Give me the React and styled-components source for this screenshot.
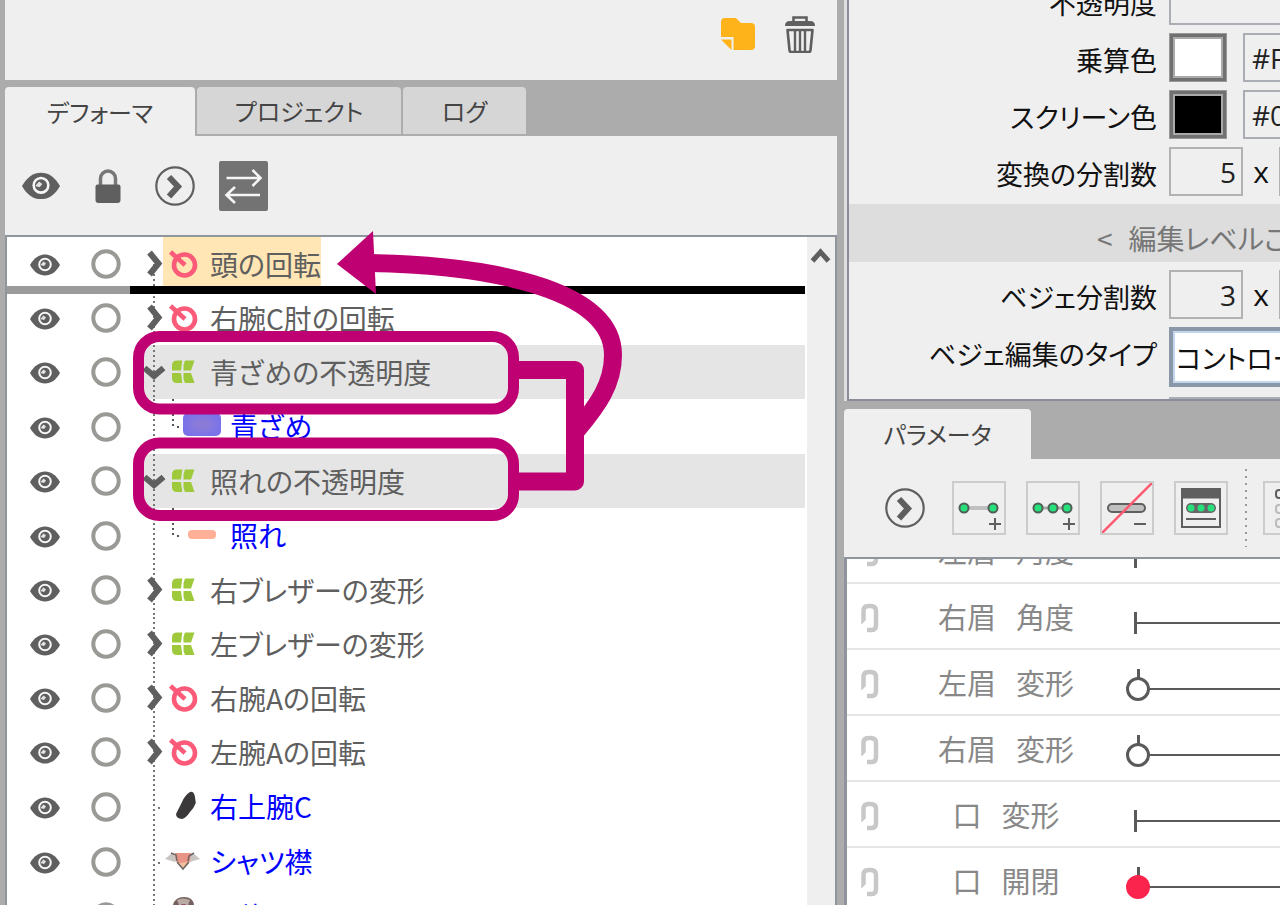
import React, { useState } from 'react';
import styled, { createGlobalStyle, css } from 'styled-components';

const INK = '#5f5f5f';
const ACCENT = '#bf0072';

const GlobalStyle = createGlobalStyle`
  * { box-sizing: border-box; }
  body { margin: 0; background: #acacac; }
  body, button, input, select {
    font-family: "Noto Sans CJK JP", "Noto Sans", sans-serif;
    font-feature-settings: "palt";
  }
`;

const Workspace = styled.main`
  display: flex;
  height: 100vh;
  overflow: hidden;
  background: #acacac;
  color: #585858;
`;

const LeftColumn = styled.div`
  flex: 0 0 65%;
  min-width: 0;
  margin-left: 5px;
  display: flex;
  flex-direction: column;
`;

const RightColumn = styled.div`
  flex: 1;
  min-width: 0;
  margin-left: 7px;
  display: flex;
  flex-direction: column;
`;

const IconButton = styled.button`
  display: grid;
  place-items: center;
  flex: none;
  padding: 0;
  border: 0;
  background: none;
  color: ${INK};
  svg { display: block; }
`;

const PartsFooter = styled.section`
  height: 80px;
  flex: none;
  display: flex;
  justify-content: flex-end;
  align-items: flex-start;
  gap: 28px;
  padding: 15px 21px;
  background: #efefef;
`;

const TabBar = styled.div`
  display: flex;
  flex: none;
  gap: 2px;
  height: ${(p) => p.$height}px;
  padding-top: ${(p) => p.$gap}px;
`;

const Tab = styled.button`
  width: ${(p) => p.$width}px;
  height: ${(p) => (p.$active ? '100%' : '47px')};
  padding: 0;
  border: 0;
  border-radius: 4px 4px 0 0;
  background: ${(p) => (p.$active ? '#efefef' : '#d6d6d6')};
  color: #444;
  font-size: 24px;
  line-height: 48px;
  white-space: nowrap;
`;

const ToolBar = styled.div`
  display: flex;
  flex: none;
  align-items: center;
  background: #efefef;
`;

const DeformerTools = styled(ToolBar)`
  height: 99px;
  padding-left: 16px;
`;

const ToolSlot = styled(IconButton)`
  width: ${(p) => p.$width}px;
  height: 52px;
`;

const RowSlot = styled(ToolSlot)`
  padding-top: 2px;
`;

const TreePanel = styled.div`
  position: relative;
  flex: 1;
  min-height: 0;
  display: flex;
  border: 2px solid #8f969d;
  border-bottom: 0;
  background: #fff;
`;

const TreeRows = styled.ul`
  position: relative;
  flex: 1;
  min-width: 0;
  height: 100%;
  overflow: hidden;
  margin: 0;
  padding: 0;
  list-style: none;
`;

const TreeRow = styled.li`
  position: relative;
  display: flex;
  align-items: center;
  height: ${(p) => (p.$leaf ? 55 : 54)}px;
  margin-right: 2px;
`;

const TreeCell = styled.div`
  align-self: stretch;
  flex: 1;
  min-width: 0;
  display: flex;
  align-items: center;
  margin-left: 11px;
  background: ${(p) => (p.$selected ? '#e5e5e5' : 'transparent')};
`;

const Guide = styled.div`
  align-self: stretch;
  flex: none;
  display: grid;
  align-items: center;
  justify-content: start;
  width: 22px;
  padding-left: 1px;
  background:
    linear-gradient(#777, #777) 17px 28px / ${(p) => (p.$stub ? 2 : 0)}px 2px no-repeat,
    repeating-linear-gradient(#777 0 2px, transparent 2px 5px) 12px ${(p) => (p.$first ? 27 : 0)}px / 2px 100% no-repeat;
  color: ${INK};
  svg { position: relative; }
`;

const Branch = styled.div`
  align-self: stretch;
  flex: none;
  width: 20px;
  background:
    repeating-linear-gradient(#555 0 2px, transparent 2px 5px) 9px 0 / 2px 29px no-repeat,
    linear-gradient(#555, #555) 14px 27px / 2px 2px no-repeat;
`;

const NodeLabel = styled.div`
  display: flex;
  align-items: center;
  height: 54px;
  align-self: flex-start;
  gap: 7px;
  background: ${(p) => (p.$dropTarget ? '#ffe6b4' : 'transparent')};
  color: ${(p) => (p.$art ? '#0000ff' : INK)};
  font-size: 28px;
  line-height: 54px;
  white-space: nowrap;
  svg { flex: none; display: block; }
  span { height: 54px; }
`;

const DropLine = styled.div`
  position: absolute;
  z-index: 1;
  top: 49px;
  left: 0;
  right: 0;
  height: 8px;
  background: linear-gradient(to right, #9b9b9b 123px, #000 123px);
`;

const ScrollTrack = styled.div`
  flex: none;
  width: 28px;
  padding-top: 9px;
  background: #efefef;
`;

const Annotation = styled.svg`
  position: absolute;
  z-index: 2;
  left: 123px;
  top: -12px;
  pointer-events: none;
`;

const SettingsPanel = styled.form`
  flex: none;
  height: 401px;
  margin: 0 0 0 3px;
  display: flex;
  flex-direction: column;
  justify-content: flex-end;
  gap: 8px;
  overflow: hidden;
  border-left: 2px solid #8a8e96;
  border-bottom: 2px solid #8a8e96;
  box-shadow: -3px 0 0 #dedede;
  background: #efefef;
`;

const SettingRow = styled.div`
  flex: none;
  display: flex;
  align-items: flex-start;
  min-height: 49px;
  color: #111;
  font-size: 27px;
  white-space: nowrap;
`;

const ClippedRow = styled(SettingRow)`
  min-height: 0;
  height: 4px;
  padding-top: 2px;
  overflow: hidden;
`;

const SettingLabel = styled.label`
  flex: none;
  width: 308px;
  height: 49px;
  margin-right: 12px;
  text-align: right;
  line-height: 53px;
`;

const fieldLook = css`
  flex: none;
  height: 49px;
  border: 2px solid #b2b2b2;
  background: #efefef;
  color: #222;
  font-family: "Open Sans", "Noto Sans CJK JP", sans-serif;
  font-size: 28px;
`;

const NumberField = styled.input`
  ${fieldLook}
  width: 74px;
  padding: 0 5px 0;
  text-align: right;
`;

const TextField = styled.input`
  ${fieldLook}
  width: ${(p) => p.$width}px;
  padding: 0 7px;
  border-color: #aaaeb4;
`;

const Times = styled.span`
  width: 36px;
  flex: none;
  font-family: "Open Sans", sans-serif;
  font-size: 30px;
  line-height: 49px;
  text-align: center;
`;

const Swatch = styled.button`
  flex: none;
  width: 58px;
  height: 49px;
  margin-right: 16px;
  padding: 0;
  border: 4px solid #707070;
  outline: 1px solid #999;
  outline-offset: -1px;
  box-shadow: inset 0 0 0 2px #aaa;
  background: ${(p) => p.$color};
`;

const Select = styled.select`
  flex: none;
  width: 260px;
  height: 60px;
  padding: 0 3px;
  appearance: none;
  border: 4px solid #8a97a8;
  border-radius: 0;
  box-shadow: inset 0 0 0 2px #c3d6ec;
  background: #fff;
  color: #111;
  font-size: 27px;
`;

const LevelBand = styled.div`
  flex: none;
  display: flex;
  gap: 16px;
  height: 58px;
  padding: 6px 0 0 248px;
  background: #dddddd;
  color: #777;
  font-size: 28px;
  line-height: 56px;
  white-space: nowrap;
`;

const ParameterTools = styled(ToolBar)`
  height: 98px;
  gap: 20px;
  padding-left: 41px;
  overflow: hidden;
`;

const RoundTool = styled(IconButton)`
  width: 40px;
  height: 40px;
  margin-right: 7px;
`;

const KeyTool = styled(IconButton)`
  width: 54px;
  height: 54px;
  border: 2px solid #cccccc;
`;

const ToolDivider = styled.div`
  flex: none;
  width: 2px;
  height: 78px;
  margin: 0 -4px 0 -3px;
  background: repeating-linear-gradient(#999 0 2px, transparent 2px 7px);
`;

const ParameterList = styled.ul`
  flex: 1;
  min-height: 0;
  overflow: hidden;
  margin: 0;
  padding: 0;
  list-style: none;
  border-top: 2px solid #8f949d;
  border-left: 3px solid #8f949d;
  background: #fff;
`;

const ParameterRow = styled.li`
  display: flex;
  align-items: ${(p) => (p.$clipped ? 'flex-end' : 'stretch')};
  height: ${(p) => (p.$clipped ? 25 : 66)}px;
  overflow: hidden;
  border-bottom: 2px solid #e6e6e6;
  color: #888;
`;

const ParameterInner = styled.div`
  display: flex;
  flex: none;
  align-items: center;
  height: 64px;
`;

const LinkButton = styled(IconButton)`
  width: 46px;
  padding-top: 3px;
  color: #c8c8c8;
`;

const ParameterName = styled.label`
  display: flex;
  justify-content: center;
  gap: 20px;
  width: 226px;
  font-size: 29px;
  line-height: 64px;
  white-space: nowrap;
`;

const barThumb = css`
  border: 0;
  background: linear-gradient(#5a5a5a, #5a5a5a) 8px 1px / 3px 22px no-repeat;
`;

const knobThumb = css`
  border: 3px solid ${(p) => (p.$kind === 'key' ? '#fb244d' : '#5a5a5a')};
  border-radius: 50%;
  background: ${(p) => (p.$kind === 'key' ? '#fb244d' : '#fff')};
`;

const Slider = styled.input`
  flex: none;
  width: 300px;
  height: 64px;
  margin: 0 0 0 7px;
  appearance: none;
  background:
    linear-gradient(#5a5a5a, #5a5a5a) 10px 38px / 100% 2px no-repeat,
    linear-gradient(#5a5a5a, #5a5a5a) 11px 19px / 3px ${(p) => (p.$kind === 'bar' ? 0 : 12)}px no-repeat;
  &::-webkit-slider-thumb {
    appearance: none;
    width: 24px;
    height: 24px;
    margin-top: 14px;
    ${(p) => (p.$kind === 'bar' ? barThumb : knobThumb)}
  }
`;

const EyeIcon = ({ size = 30 }) => (
  <svg width={size} height={(size * 22) / 30} viewBox="0 0 30 22" aria-hidden="true">
    <path d="M0 11C4 4 9 .5 15 .5S26 4 30 11C26 18 21 21.500 15 21.500S4 18 0 11Z" fill={INK} />
    <circle cx="15" cy="10.500" r="5.800" fill={INK} stroke="#f7f7f7" strokeWidth="2" />
    <path d="M10.500 11 13.500 7.500l2.500 2-2 2.500Z" fill="#e4e4e4" />
  </svg>
);

const LockIcon = () => (
  <svg width="26" height="36" viewBox="0 0 26 36" aria-hidden="true">
    <path d="M5.500 17V10.500a7.500 7.500 0 0 1 15 0V17" fill="none" stroke="#777" strokeWidth="3.500" />
    <path d="M.5 18.500q0-2 2-2h21q2 0 2 2V32q0 3-3 3H3.500q-3 0-3-3Z" fill={INK} />
  </svg>
);

const RoundChevron = () => (
  <svg width="40" height="40" viewBox="0 0 40 40" aria-hidden="true">
    <circle cx="20" cy="20" r="18.700" fill="none" stroke={INK} strokeWidth="2.200" />
    <path d="M14 11 23 20.500 14 30.500" fill="none" stroke={INK} strokeWidth="6" />
  </svg>
);

const SwapIcon = () => (
  <svg width="49" height="50" viewBox="0 0 49 50" aria-hidden="true">
    <rect width="49" height="50" rx="2" fill="#737373" />
    <path d="M7.500 17H41M33.500 9l8 8-8 8M41 34H7.500M16 26l-8.500 8 8.500 8" fill="none" stroke="#f5f5f5" strokeWidth="2.600" />
  </svg>
);

const FolderIcon = () => (
  <svg width="36" height="38" viewBox="0 -2 36 38" aria-hidden="true">
    <path d="M1 20V5q0-4 4-4h11l5 5h10q4 0 4 4v19q0 4-4 4H13.500V20Z" fill="#ffb31a" />
    <path d="M1 22.500H11.500V33Z" fill="#ffb31a" />
  </svg>
);

const TrashIcon = () => (
  <svg width="32" height="38" viewBox="0 0 32 38" aria-hidden="true" fill="none" stroke={INK}>
    <path d="M9.500 7V2.500h13V7" strokeWidth="2.600" />
    <path d="M1 11q0-5 5-5h20q5 0 5 5Z" fill={INK} stroke="none" />
    <path d="M3.500 15h25L26.500 35q0 2-2 2h-17q-2 0-2-2Z" strokeWidth="2.600" strokeLinejoin="round" />
    <path d="M11 16v20M16 16v20M21 16v20" strokeWidth="2.400" />
  </svg>
);

const Chevron = ({ open }) => (
  <svg width="24" height="28" viewBox="0 0 24 28" aria-hidden="true">
    <path
      d={open ? 'M2.500 10 12 18l9.500-8' : 'M7.500 2.500 16.500 13.500 7.500 24.500'}
      fill="none"
      stroke={INK}
      strokeWidth="6"
    />
  </svg>
);

const RotationIcon = () => (
  <svg width="40" height="34" viewBox="0 0 40 34" aria-hidden="true" fill="none" stroke="#fb5b78">
    <circle cx="21.500" cy="18" r="10.500" strokeWidth="4.600" />
    <path d="M7.500 5 22 18" strokeWidth="4.600" />
  </svg>
);

const WarpIcon = () => (
  <svg width="40" height="34" viewBox="0 0 40 34" aria-hidden="true" fill="#9dc93a">
    <path d="M9 15.500V10.500q0-5 5-5h5.300L18 15.500Z" />
    <path d="M9 18h9l1.300 10H14q-5 0-5-5Z" />
    <path d="M22 5.500h9.500l-3.500 10H20.500V10Z" />
    <path d="M20.500 18H28l3.500 10H22l-1.500-4Z" />
  </svg>
);

const ArmThumb = () => (
  <svg width="40" height="34" viewBox="0 0 40 34" aria-hidden="true">
    <path d="M27 3Q31 2 32 8l.8 6Q31 19 27 23q-4 6-8 7-6-.5-6-5 3-6 6-12 3-7 8-10Z" fill="#3a3838" />
  </svg>
);

const CollarThumb = () => (
  <svg width="40" height="34" viewBox="0 0 40 34" aria-hidden="true">
    <path d="M2 15 9 9l6 6-3 3Z" fill="#c9c5c2" />
    <path d="M37 15 30 9l-6 6 3 3Z" fill="#c9c5c2" />
    <path d="M12 9h16l-1 8-7 8-7-8Z" fill="#e89585" />
    <path d="m16 19 8-1-4 7Z" fill="#f2c0a0" />
    <path d="m8 9 5 2 1 6M31 9l-5 3-1 5M14 18l6 7 6-7" fill="none" stroke="#6d6663" strokeWidth="1.500" />
  </svg>
);

const BodyThumb = () => (
  <svg width="40" height="42" viewBox="0 0 40 42" aria-hidden="true">
    <path d="M10 42V10Q12 2 21 2t10 8v32Z" fill="#75625e" />
    <path d="M14 5q6-3 13 0l-2 5h-9Z" fill="#b9aaa4" />
    <path d="m18 9 5 0-2 6Z" fill="#a7506d" />
  </svg>
);

const PaleThumb = () => (
  <svg width="40" height="26" viewBox="0 0 40 26" aria-hidden="true">
    <defs>
      <radialGradient id="pale">
        <stop offset="0.300" stopColor="#8a7bd9" />
        <stop offset="1" stopColor="#7b72ea" />
      </radialGradient>
    </defs>
    <rect x="0" y="0" width="38" height="23" rx="5" fill="url(#pale)" />
  </svg>
);

const BlushThumb = () => (
  <svg width="40" height="26" viewBox="0 0 40 26" aria-hidden="true">
    <rect x="5" y="8" width="28" height="9" rx="4" fill="#ffb096" />
  </svg>
);

const glyphs = {
  rotation: RotationIcon,
  warp: WarpIcon,
  arm: ArmThumb,
  collar: CollarThumb,
  body: BodyThumb,
  pale: PaleThumb,
  blush: BlushThumb,
};

const nodes = [
  { name: '頭の回転', icon: 'rotation', arrow: 'closed', dropTarget: true },
  { name: '右腕C肘の回転', icon: 'rotation', arrow: 'closed' },
  { name: '青ざめの不透明度', icon: 'warp', arrow: 'open', selected: true },
  { name: '青ざめ', icon: 'pale', child: true, art: true },
  { name: '照れの不透明度', icon: 'warp', arrow: 'open', selected: true },
  { name: '照れ', icon: 'blush', child: true, art: true },
  { name: '右ブレザーの変形', icon: 'warp', arrow: 'closed' },
  { name: '左ブレザーの変形', icon: 'warp', arrow: 'closed' },
  { name: '右腕Aの回転', icon: 'rotation', arrow: 'closed' },
  { name: '左腕Aの回転', icon: 'rotation', arrow: 'closed' },
  { name: '右上腕C', icon: 'arm', art: true },
  { name: 'シャツ襟', icon: 'collar', art: true },
  { name: '胴体', icon: 'body', art: true },
];

function DeformerRow({ node }) {
  const Glyph = glyphs[node.icon];
  return (
    <TreeRow $leaf={node.art}>
      <RowSlot $width={75} aria-label="表示"><EyeIcon /></RowSlot>
      <RowSlot $width={48} aria-label="ロック">
        <svg width="30" height="32" viewBox="0 0 30 32">
          <circle cx="15" cy="15" r="12.700" fill="none" stroke="#999996" strokeWidth="4" />
        </svg>
      </RowSlot>
      <TreeCell $selected={node.selected}>
        <Guide $first={node.dropTarget} $stub={node.art && !node.child}>
          {node.arrow && <Chevron open={node.arrow === 'open'} />}
        </Guide>
        {node.child && <Branch />}
        <NodeLabel $dropTarget={node.dropTarget} $art={node.art}>
          <Glyph />
          <span>{node.name}</span>
        </NodeLabel>
      </TreeCell>
      {node.dropTarget && <DropLine />}
    </TreeRow>
  );
}

const LinkIcon = () => (
  <svg width="20" height="32" viewBox="0 0 20 32" aria-hidden="true" fill="none" stroke="currentColor" strokeWidth="4.500">
    <path d="M3.500 22V9q0-5 5-5h2q5.500 0 5.500 5v14q0 5-4 5H7" />
    <path d="M1 25 7 19" stroke="#fff" strokeWidth="3" />
  </svg>
);

const Dot = ({ x, y }) => <circle cx={x} cy={y} r="4.500" fill="#26e07c" stroke="#4f5f55" strokeWidth="2" />;

const KeyGlyph = ({ kind }) => (
  <svg width="50" height="50" viewBox="0 0 50 50" aria-hidden="true" fill="none" stroke={INK} strokeWidth="2">
    {kind === 'two' && (
      <>
        <path d="M10 25h30" stroke="#c0c0c0" strokeWidth="4" />
        <Dot x={10} y={25} /><Dot x={39} y={25} />
        <path d="M41 35v12M35 41h12" />
      </>
    )}
    {kind === 'three' && (
      <>
        <path d="M10 25h30" stroke="#aaa" strokeWidth="3" />
        <Dot x={10} y={25} /><Dot x={25} y={25} /><Dot x={39} y={25} />
        <path d="M41 35v12M35 41h12" />
      </>
    )}
    {kind === 'remove' && (
      <>
        <rect x="6" y="21" width="37" height="8" rx="4" fill="#c0c0c0" />
        <path d="M0 50 50 0" stroke="#fb5b70" strokeWidth="2.500" />
        <path d="M32 41h12" />
      </>
    )}
    {kind === 'panel' && (
      <>
        <rect x="6" y="6" width="38" height="38" />
        <path d="M5 10.500h40" strokeWidth="10" />
        <path d="M15 25h20" stroke="#666" strokeWidth="10" strokeLinecap="round" />
        <circle cx="15" cy="25" r="3.500" fill="#26e07c" stroke="none" />
        <circle cx="25" cy="25" r="3.500" fill="#26e07c" stroke="none" />
        <circle cx="35" cy="25" r="3.500" fill="#26e07c" stroke="none" />
        <path d="M10 36h30" />
      </>
    )}
    {kind === 'list' && (
      <>
        <rect x="11" y="7" width="9" height="8" rx="3" />
        <rect x="11" y="22" width="9" height="8" rx="3" stroke="#bbb" />
        <rect x="11" y="36" width="9" height="8" rx="3" stroke="#bbb" />
      </>
    )}
  </svg>
);

const parameters = [
  { id: 'brow-l-angle', words: ['左眉', '角度'], kind: 'bar', clipped: true },
  { id: 'brow-r-angle', words: ['右眉', '角度'], kind: 'bar' },
  { id: 'brow-l-form', words: ['左眉', '変形'], kind: 'knob' },
  { id: 'brow-r-form', words: ['右眉', '変形'], kind: 'knob' },
  { id: 'mouth-form', words: ['口', '変形'], kind: 'bar' },
  { id: 'mouth-open', words: ['口', '開閉'], kind: 'key' },
];

const tabs = [
  { name: 'デフォーマ', width: 190 },
  { name: 'プロジェクト', width: 204 },
  { name: 'ログ', width: 123 },
];

export default function App() {
  const [tab, setTab] = useState('デフォーマ');
  return (
    <>
      <GlobalStyle />
      <Workspace>
        <LeftColumn>
          <PartsFooter>
            <IconButton aria-label="フォルダ"><FolderIcon /></IconButton>
            <IconButton aria-label="削除"><TrashIcon /></IconButton>
          </PartsFooter>
          <TabBar $height={56} $gap={7}>
            {tabs.map((t) => (
              <Tab key={t.name} $width={t.width} $active={tab === t.name} onClick={() => setTab(t.name)}>
                {t.name}
              </Tab>
            ))}
          </TabBar>
          <DeformerTools>
            <ToolSlot $width={40} aria-label="表示切替"><EyeIcon size={38} /></ToolSlot>
            <ToolSlot $width={94} aria-label="ロック切替"><LockIcon /></ToolSlot>
            <ToolSlot $width={24} aria-label="展開"><RoundChevron /></ToolSlot>
            <ToolSlot $width={129} aria-label="同期"><SwapIcon /></ToolSlot>
          </DeformerTools>
          <TreePanel>
            <TreeRows>
              {nodes.map((node) => <DeformerRow key={node.name} node={node} />)}
            </TreeRows>
            <ScrollTrack>
              <IconButton aria-label="上へ">
                <svg width="28" height="18" viewBox="0 0 28 18">
                  <path d="M5.500 15 13.500 6l8 9" fill="none" stroke={INK} strokeWidth="5" />
                </svg>
              </IconButton>
            </ScrollTrack>
            <Annotation width="500" height="300" viewBox="130 225 500 300" fill="none" stroke={ACCENT} aria-hidden="true">
              <rect x="138.500" y="336.500" width="375" height="72.500" rx="21" strokeWidth="11" />
              <rect x="138.500" y="443" width="375" height="72.500" rx="21" strokeWidth="11" />
              <path d="M515 370h60v111.500h-60" strokeWidth="18" strokeLinejoin="round" />
              <path d="M370 263C480 265 613 286 613 355C613 384 598 405 577 430" strokeWidth="18" />
              <path d="M337 264 373 231 376 294Z" fill={ACCENT} stroke="none" />
            </Annotation>
          </TreePanel>
        </LeftColumn>

        <RightColumn>
          <SettingsPanel>
            <SettingRow>
              <SettingLabel htmlFor="opacity">不透明度</SettingLabel>
              <TextField id="opacity" $width={200} />
            </SettingRow>
            <SettingRow>
              <SettingLabel htmlFor="multiply">乗算色</SettingLabel>
              <Swatch type="button" $color="#fff" aria-label="乗算色" />
              <TextField id="multiply" $width={140} defaultValue="#FFFFFF" />
            </SettingRow>
            <SettingRow>
              <SettingLabel htmlFor="screen">スクリーン色</SettingLabel>
              <Swatch type="button" $color="#000" aria-label="スクリーン色" />
              <TextField id="screen" $width={140} defaultValue="#000000" />
            </SettingRow>
            <SettingRow>
              <SettingLabel htmlFor="division">変換の分割数</SettingLabel>
              <NumberField id="division" defaultValue="5" />
              <Times>x</Times>
              <NumberField aria-label="変換の分割数 縦" defaultValue="5" />
            </SettingRow>
            <LevelBand>
              <span>&lt;</span>
              <span>編集レベルご</span>
            </LevelBand>
            <SettingRow>
              <SettingLabel htmlFor="bezier">ベジェ分割数</SettingLabel>
              <NumberField id="bezier" defaultValue="3" />
              <Times>x</Times>
              <NumberField aria-label="ベジェ分割数 縦" defaultValue="3" />
            </SettingRow>
            <SettingRow>
              <SettingLabel htmlFor="bezier-type">ベジェ編集のタイプ</SettingLabel>
              <Select id="bezier-type"><option>コントロールポイント</option></Select>
            </SettingRow>
            <ClippedRow>
              <SettingLabel as="span" />
              <TextField $width={200} aria-label="値" />
            </ClippedRow>
          </SettingsPanel>

          <TabBar $height={58} $gap={8}>
            <Tab $width={187} $active>パラメータ</Tab>
          </TabBar>
          <ParameterTools>
            <RoundTool aria-label="メニュー"><RoundChevron /></RoundTool>
            {['two', 'three', 'remove', 'panel'].map((kind) => (
              <KeyTool key={kind} aria-label={kind}><KeyGlyph kind={kind} /></KeyTool>
            ))}
            <ToolDivider />
            <KeyTool aria-label="list"><KeyGlyph kind="list" /></KeyTool>
          </ParameterTools>
          <ParameterList>
            {parameters.map((p) => (
              <ParameterRow key={p.id} $clipped={p.clipped}>
                <ParameterInner>
                  <LinkButton aria-label="結合"><LinkIcon /></LinkButton>
                  <ParameterName htmlFor={p.id}>
                    {p.words.map((w) => <span key={w}>{w}</span>)}
                  </ParameterName>
                  <Slider id={p.id} type="range" defaultValue="0" $kind={p.kind} />
                </ParameterInner>
              </ParameterRow>
            ))}
          </ParameterList>
        </RightColumn>
      </Workspace>
    </>
  );
}
